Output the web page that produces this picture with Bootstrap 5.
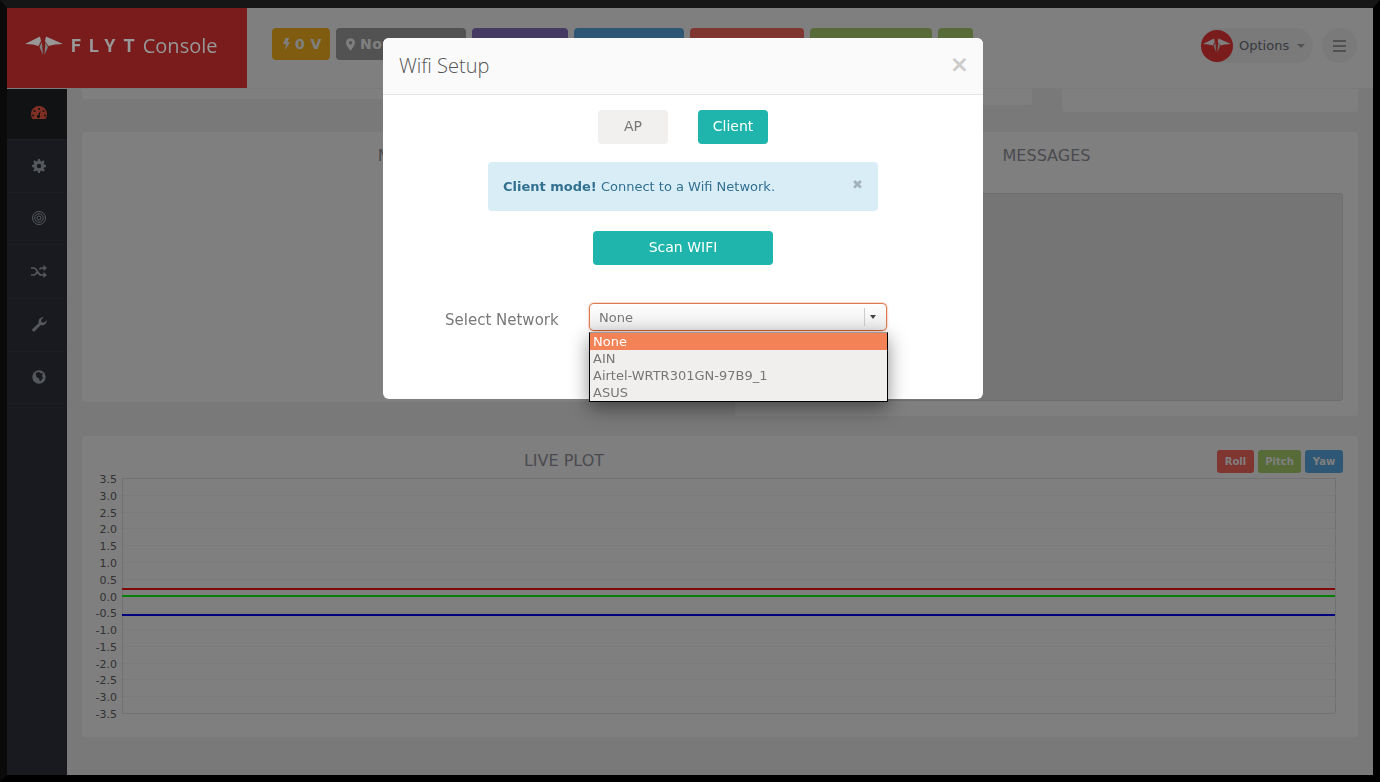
<!DOCTYPE html>
<html lang="en">
<head>
  <meta charset="UTF-8" />
  <title>FlytConsole</title>
  <link href="https://cdn.jsdelivr.net/npm/bootstrap@5.3.0/dist/css/bootstrap.min.css" rel="stylesheet" />
  <style>
    html, body { height: 100%; overflow: hidden; }
    body {
      font-family: "DejaVu Sans", sans-serif;
      font-size: 13px;
      background: #f2f3f5;
      color: #797979;
      border-style: solid;
      border-width: 8px 7px 7px 7px;
      border-color: #2c2c2c #000 #000 #141414;
    }
    .app-wrap { height: 767px; }

    /* top bar */
    .top-bar { height: 80px; flex: none; background: #fff; box-shadow: 0 1px 0 #f4f4f4; position: relative; }
    .logo-box { width: 240px; background: #f43838; padding: 0 0 4px 18px; gap: 8px; }
    .logo-mark { position: relative; z-index: 1060; }
    .logo-txt { position: relative; z-index: 1060; color: #989898; font-family: "Open Sans", sans-serif; font-size: 20px; line-height: 1; white-space: nowrap; display: flex; align-items: center; }
    .logo-txt b { font-family: Roboto, sans-serif; font-weight: 700; font-size: 18px; letter-spacing: 8px; margin-right: 0; }
    .stat-tile { height: 32px; border-radius: 4px; color: #fff; font-weight: 700; font-size: 14px; padding: 0 0 0 11px; gap: 5px; white-space: nowrap; letter-spacing: .5px; }
    .stat-tile svg { flex: none; }
    .stat-row { padding: 20px 0 0 25px; gap: 6px; }
    .tile-orange { width: 58px; background: #ffb820; }
    .tile-gray { width: 130px; background: #a4a4a4; padding-left: 10px; }
    .tile-purple { width: 96px; background: #8a74c4; }
    .tile-blue { width: 110px; background: #5aaee8; }
    .tile-red { width: 114px; background: #ff6a60; }
    .tile-green { width: 122px; background: #acd670; }
    .tile-green2 { width: 35px; background: #acd670; }
    .opt-wrap { position: absolute; right: 60px; top: 20px; }
    .opt-pill { width: 112px; height: 35px; border-radius: 18px; background: #f4f4f4; color: #6b7280; padding-left: 38px; gap: 8px; }
    .opt-avatar { position: absolute; left: 0; top: 1.5px; width: 32px; height: 32px; border-radius: 50%; background: #f43838; }
    .opt-caret { border: 4px solid transparent; border-top: 4px solid #a3a3a3; margin-top: 4px; }
    .ham-btn { position: absolute; right: 16px; top: 20px; width: 35px; height: 35px; border-radius: 50%; background: #f4f4f4; gap: 3px; }
    .ham-btn span { display: block; width: 13px; height: 2px; background: #a3a3a3; }

    /* side bar */
    .side-bar { width: 60px; background: #32343e; flex: none; }
    .side-item { height: 52px; border-bottom: 1px solid #3a3c46; padding: 0 0 1px 4px; }
    .side-item:nth-child(1) { padding-bottom: 3px; }
    .side-item:nth-child(2), .side-item:nth-child(5) { height: 53px; }
    .side-item:nth-child(4) { height: 54px; }
    .side-item.on { background: #232429; }

    /* content */
    .main-area { padding: 0 15px; }
    .panel-box { background: #fff; border-radius: 4px; }
    .peek-row { gap: 0; height: 44px; }
    .peek-a { width: 650px; height: 11px; border-radius: 0 0 4px 4px; }
    .peek-b { width: 300px; height: 17px; border-radius: 0 0 4px 0; }
    .peek-c { width: 296px; height: 24px; margin-left: 30px; border-radius: 0 0 4px 4px; }
    .mid-row { height: 284px; }
    .map-box { width: 638px; height: 270px; margin-right: 15px; }
    .map-box .panel-head { padding-right: 12px; }
    .msg-box { width: 623px; height: 284px; padding: 0 15px; }
    .panel-head { font-size: 16px; color: #9596a0; text-align: center; padding-top: 14px; line-height: 20px; }
    .msg-list { height: 208px; margin-top: 27px; background: #ebebeb; border: 1px solid #dcdcdc; border-radius: 3px; }
    .plot-box { height: 301px; margin-top: 20px; padding: 0 15px; position: relative; }
    .plot-head { height: 42px; position: relative; }
    .plot-title { position: absolute; left: 0; width: 934px; text-align: center; top: 15px; font-size: 16px; color: #9596a0; line-height: 20px; }
    .plot-btns { position: absolute; right: 0; top: 14px; gap: 4px; }
    .plot-btns span { height: 23px; line-height: 23px; border-radius: 3px; color: #fff; font-size: 10px; font-weight: 700; text-align: center; }
    .b-roll { width: 37px; background: #ff6a60; }
    .b-pitch { width: 43px; background: #acd670; }
    .b-yaw { width: 38px; background: #5aaee8; }
    .plot-box svg { display: block; overflow: visible; font-family: "DejaVu Sans", sans-serif; }

    /* modal */
    .wifi-dialog { width: 600px; max-width: 600px; margin: 38px 0 0 383px; }
    .wifi-dialog .modal-content { height: 361px; border: 0; border-radius: 6px; }
    .wifi-dialog .modal-header { height: 57px; padding: 0 16px; background: #fafafa; border-bottom: 1px solid #e5e5e5; border-radius: 6px 6px 0 0; }
    .wifi-title { font-family: "Open Sans", sans-serif; font-weight: 300; font-size: 20px; color: #555; }
    .x-close { font-size: 23px; font-weight: 700; color: #ccc; line-height: 1; background: none; border: 0; padding: 0; margin: -3px -2px 0 0; }
    .wifi-dialog .modal-body { padding: 15px 0 0; position: relative; }
    .mode-btn { width: 70px; height: 34px; padding: 0 0 2px; border: 0; font-size: 14px; border-radius: 4px; }
    .mode-off { background: #f1f0ef; color: #777; }
    .mode-on, .scan-btn { background: #1fb5ac; color: #fff; }
    .mode-on:hover, .scan-btn:hover { background: #1fb5ac; color: #fff; }
    .mode-gap { gap: 30px; }
    .scan-btn { width: 180px; height: 34px; padding: 0 0 2px; border: 0; font-size: 14px; border-radius: 4px; }
    .wifi-note { width: 390px; height: 49px; margin: 18px auto 20px; background: #d9edf7; color: #31708f; border-radius: 4px; padding: 0 15px; font-size: 13px; }
    .note-x { font-size: 13px; color: #a3b3bb; margin: -4px 0 0; }
    .net-row { margin-top: 38px; padding-left: 62px; }
    .net-label { width: 144px; font-size: 15px; color: #797979; padding-top: 6px; }
    .net-select { width: 298px; height: 28px; border: 1px solid #df7a50; border-bottom-color: #c95c2e; border-radius: 5px; background: linear-gradient(#fff, #ececec); box-shadow: 0 0 2px #df7a50; color: #777; padding: 1px 0 0 9px; position: relative; }
    .net-arrow { position: absolute; right: 0; top: 4px; width: 22px; height: 18px; border-left: 1px solid #ccc; }
    .net-arrow i { display: block; width: 0; border: 3px solid transparent; border-top: 4px solid #444; margin: 7px 0 0 5px; }
    .net-list { position: absolute; left: 206px; top: 237px; width: 299px; height: 70px; background: #f1efed; border: 1px solid #000; border-top-color: #999; box-shadow: 0 6px 18px rgba(0,0,0,.45); color: #777; line-height: 17px; z-index: 5; }
    .net-list div { height: 17px; padding-left: 3px; }
    .net-list .sel { background: #f38357; color: #fff; }
  </style>
</head>
<body>

  <div class="app-wrap d-flex flex-column">
    <!-- top bar -->
    <div class="top-bar d-flex">
      <div class="logo-box d-flex align-items-center">
        <svg class="logo-mark" width="38" height="20" viewBox="0 0 38 20">
          <path d="M0 8 15 .5 16 5 13.500 10 8 8.500Z M38 8 21 .5 20 5 23.500 10 30 8.500Z" fill="#989898"/>
          <path d="M14.500 11 16.800 6 18 19Z M23 11 20.500 6 19.500 19Z" fill="#808080"/>
        </svg>
        <div class="logo-txt"><b>FLYT</b>Console</div>
      </div>
      <div class="stat-row d-flex">
        <div class="stat-tile tile-orange d-flex align-items-center">
          <svg width="7" height="14" viewBox="0 0 8 14"><path d="M3 0H7L5 5H8L2 14L3.500 7H0Z" fill="#fff"/></svg>0 V
        </div>
        <div class="stat-tile tile-gray d-flex align-items-center">
          <svg width="9" height="13" viewBox="0 0 10 14"><path fill-rule="evenodd" d="M5 0a5 5 0 0 1 5 5c0 3-5 9-5 9S0 8 0 5a5 5 0 0 1 5-5Zm0 3a2 2 0 1 0 0 4 2 2 0 0 0 0-4Z" fill="#fff"/></svg>No GPS
        </div>
        <div class="stat-tile tile-purple"></div>
        <div class="stat-tile tile-blue"></div>
        <div class="stat-tile tile-red"></div>
        <div class="stat-tile tile-green"></div>
        <div class="stat-tile tile-green2"></div>
      </div>
      <div class="opt-wrap">
        <div class="opt-pill d-flex align-items-center">Options<span class="opt-caret"></span></div>
        <div class="opt-avatar d-flex align-items-center justify-content-center">
          <svg width="28" height="15" viewBox="0 0 38 20">
            <path d="M0 8 15 .5 16 5 13.500 10 8 8.500Z M38 8 21 .5 20 5 23.500 10 30 8.500Z" fill="#fff"/>
            <path d="M14.500 11 16.800 6 18 19Z M23 11 20.500 6 19.500 19Z" fill="#ddd"/>
          </svg>
        </div>
      </div>
      <div class="ham-btn d-flex flex-column align-items-center justify-content-center"><span></span><span></span><span></span></div>
    </div>

    <div class="d-flex flex-grow-1">
      <!-- side bar -->
      <div class="side-bar">
        <div class="side-item on d-flex align-items-center justify-content-center">
          <svg width="16" height="13" viewBox="0 0 16 13"><path fill-rule="evenodd" d="M8 0a8 8 0 0 1 8 8c0 2-.6 3.600-1.500 5H1.500C.6 11.600 0 10 0 8a8 8 0 0 1 8-8ZM8 2a1 1 0 1 0 0 2 1 1 0 0 0 0-2ZM3.500 4a1 1 0 1 0 0 2 1 1 0 0 0 0-2ZM12.500 4a1 1 0 1 0 0 2 1 1 0 0 0 0-2ZM2 8.500a1 1 0 1 0 0 2 1 1 0 0 0 0-2ZM14 8.500a1 1 0 1 0 0 2 1 1 0 0 0 0-2ZM9.500 4.500 7 9a1.600 1.600 0 1 0 1.800.6Z" fill="#ff5f46"/></svg>
        </div>
        <div class="side-item d-flex align-items-center justify-content-center">
          <svg width="14" height="14" viewBox="0 0 14 14"><path fill-rule="evenodd" d="M6 0h2l.4 1.900 1.200.5L11.200 1.300l1.500 1.500-1.100 1.600.5 1.200L14 6v2l-1.900.4-.5 1.200 1.100 1.600-1.500 1.500-1.600-1.100-1.200.5L8 14H6l-.4-1.900-1.200-.5-1.600 1.100-1.500-1.500 1.100-1.600-.5-1.200L0 8V6l1.900-.4.500-1.200-1.100-1.600 1.500-1.500 1.600 1.100 1.200-.5ZM7 4.800a2.200 2.200 0 1 0 0 4.400 2.200 2.200 0 0 0 0-4.400Z" fill="#a9b0b8"/></svg>
        </div>
        <div class="side-item d-flex align-items-center justify-content-center">
          <svg width="14" height="14" viewBox="0 0 14 14" fill="none" stroke="#a9b0b8"><circle cx="7" cy="7" r="6.500"/><circle cx="7" cy="7" r="4.200"/><circle cx="7" cy="7" r="2"/></svg>
        </div>
        <div class="side-item d-flex align-items-center justify-content-center">
          <svg width="16" height="13" viewBox="0 0 16 13"><path d="M0 3h3c3 0 4 7 7 7h3M0 10h3c1.400 0 2.300-1.400 3-2.800M8.500 4.500C9 3.700 9.500 3 10.500 3H13" fill="none" stroke="#a9b0b8" stroke-width="1.700"/><path d="M12.500 0 16 3l-3.500 3ZM12.500 7 16 10l-3.500 3Z" fill="#a9b0b8"/></svg>
        </div>
        <div class="side-item d-flex align-items-center justify-content-center">
          <svg width="15" height="15" viewBox="0 0 15 15"><path d="M14.600 3.200a4.300 4.300 0 0 1-5.700 4.800L3 14a1.600 1.600 0 0 1-2.300-2.300L6.800 6A4.300 4.300 0 0 1 11.600.4L9 3l.5 2.300 2.400.5Z" fill="#a9b0b8"/></svg>
        </div>
        <div class="side-item d-flex align-items-center justify-content-center">
          <svg width="14" height="14" viewBox="0 0 14 14"><circle cx="7" cy="7" r="6.700" fill="#a9b0b8"/><path d="M3.500 3 7 2l2 1.500 2-.5-1 3 1 2-3 3.500-1-3L4.500 7Z" fill="#32343e"/></svg>
        </div>
      </div>

      <!-- content -->
      <div class="main-area flex-grow-1">
        <div class="peek-row d-flex align-items-start">
          <div class="panel-box peek-a"></div>
          <div class="panel-box peek-b"></div>
          <div class="panel-box peek-c"></div>
        </div>
        <div class="mid-row d-flex align-items-start">
          <div class="panel-box map-box"><div class="panel-head">MAP</div></div>
          <div class="panel-box msg-box">
            <div class="panel-head">MESSAGES</div>
            <div class="msg-list"></div>
          </div>
        </div>
        <div class="panel-box plot-box">
          <div class="plot-head">
            <div class="plot-title">LIVE PLOT</div>
            <div class="plot-btns d-flex">
              <span class="b-roll">Roll</span><span class="b-pitch">Pitch</span><span class="b-yaw">Yaw</span>
            </div>
          </div>
          <svg id="plot" width="1246" height="250"></svg>
        </div>
      </div>
    </div>
  </div>

  <!-- wifi modal -->
  <div class="modal-backdrop show"></div>
  <div class="modal d-block" tabindex="-1">
    <div class="modal-dialog wifi-dialog">
      <div class="modal-content">
        <div class="modal-header d-flex justify-content-between align-items-center">
          <div class="wifi-title">Wifi Setup</div>
          <button class="x-close" type="button">×</button>
        </div>
        <div class="modal-body">
          <div class="d-flex justify-content-center mode-gap">
            <button class="btn mode-btn mode-off">AP</button>
            <button class="btn mode-btn mode-on">Client</button>
          </div>
          <div class="wifi-note d-flex align-items-center justify-content-between">
            <div><b>Client mode!</b> Connect to a Wifi Network.</div>
            <span class="note-x">✖</span>
          </div>
          <div class="text-center"><button class="btn scan-btn">Scan WIFI</button></div>
          <div class="net-row d-flex">
            <div class="net-label">Select Network</div>
            <div class="net-select d-flex align-items-center">None<span class="net-arrow"><i></i></span></div>
          </div>
          <div class="net-list">
            <div class="sel">None</div>
            <div>AIN</div>
            <div>Airtel-WRTR301GN-97B9_1</div>
            <div>ASUS</div>
          </div>
        </div>
      </div>
    </div>
  </div>

  <script src="https://cdn.jsdelivr.net/npm/bootstrap@5.3.0/dist/js/bootstrap.bundle.min.js"></script>
  <script>
    // draw the live plot, coordinates are relative to the svg
    var svg = document.getElementById('plot');
    var left = 25, top0 = 0, w = 1213, h = 235, step = h / 14;
    var out = '';
    for (var i = 0; i <= 14; i++) {
      var y = Math.round(top0 + i * step) + 0.5;
      var val = (3.5 - i * 0.5).toFixed(1);
      out += '<line x1="' + left + '" x2="' + (left + w) + '" y1="' + y + '" y2="' + y + '" stroke="' + (i == 0 || i == 14 ? '#e4e4e4' : '#f7f7f7') + '"/>';
      out += '<text x="' + (left - 5) + '" y="' + (y + 4) + '" text-anchor="end" font-size="11" fill="#666">' + val + '</text>';
    }
    out += '<line x1="' + (left + .5) + '" x2="' + (left + .5) + '" y1="' + top0 + '" y2="' + (top0 + h) + '" stroke="#e4e4e4"/>';
    out += '<line x1="' + (left + w + .5) + '" x2="' + (left + w + .5) + '" y1="' + top0 + '" y2="' + (top0 + h) + '" stroke="#e4e4e4"/>';
    [[111, '#ff1010'], [118, '#10ff10'], [137, '#0000ff']].forEach(function (l) {
      out += '<line x1="' + left + '" x2="' + (left + w) + '" y1="' + l[0] + '" y2="' + l[0] + '" stroke="' + l[1] + '" stroke-width="2"/>';
    });
    svg.innerHTML = out;
  </script>
</body>
</html>
